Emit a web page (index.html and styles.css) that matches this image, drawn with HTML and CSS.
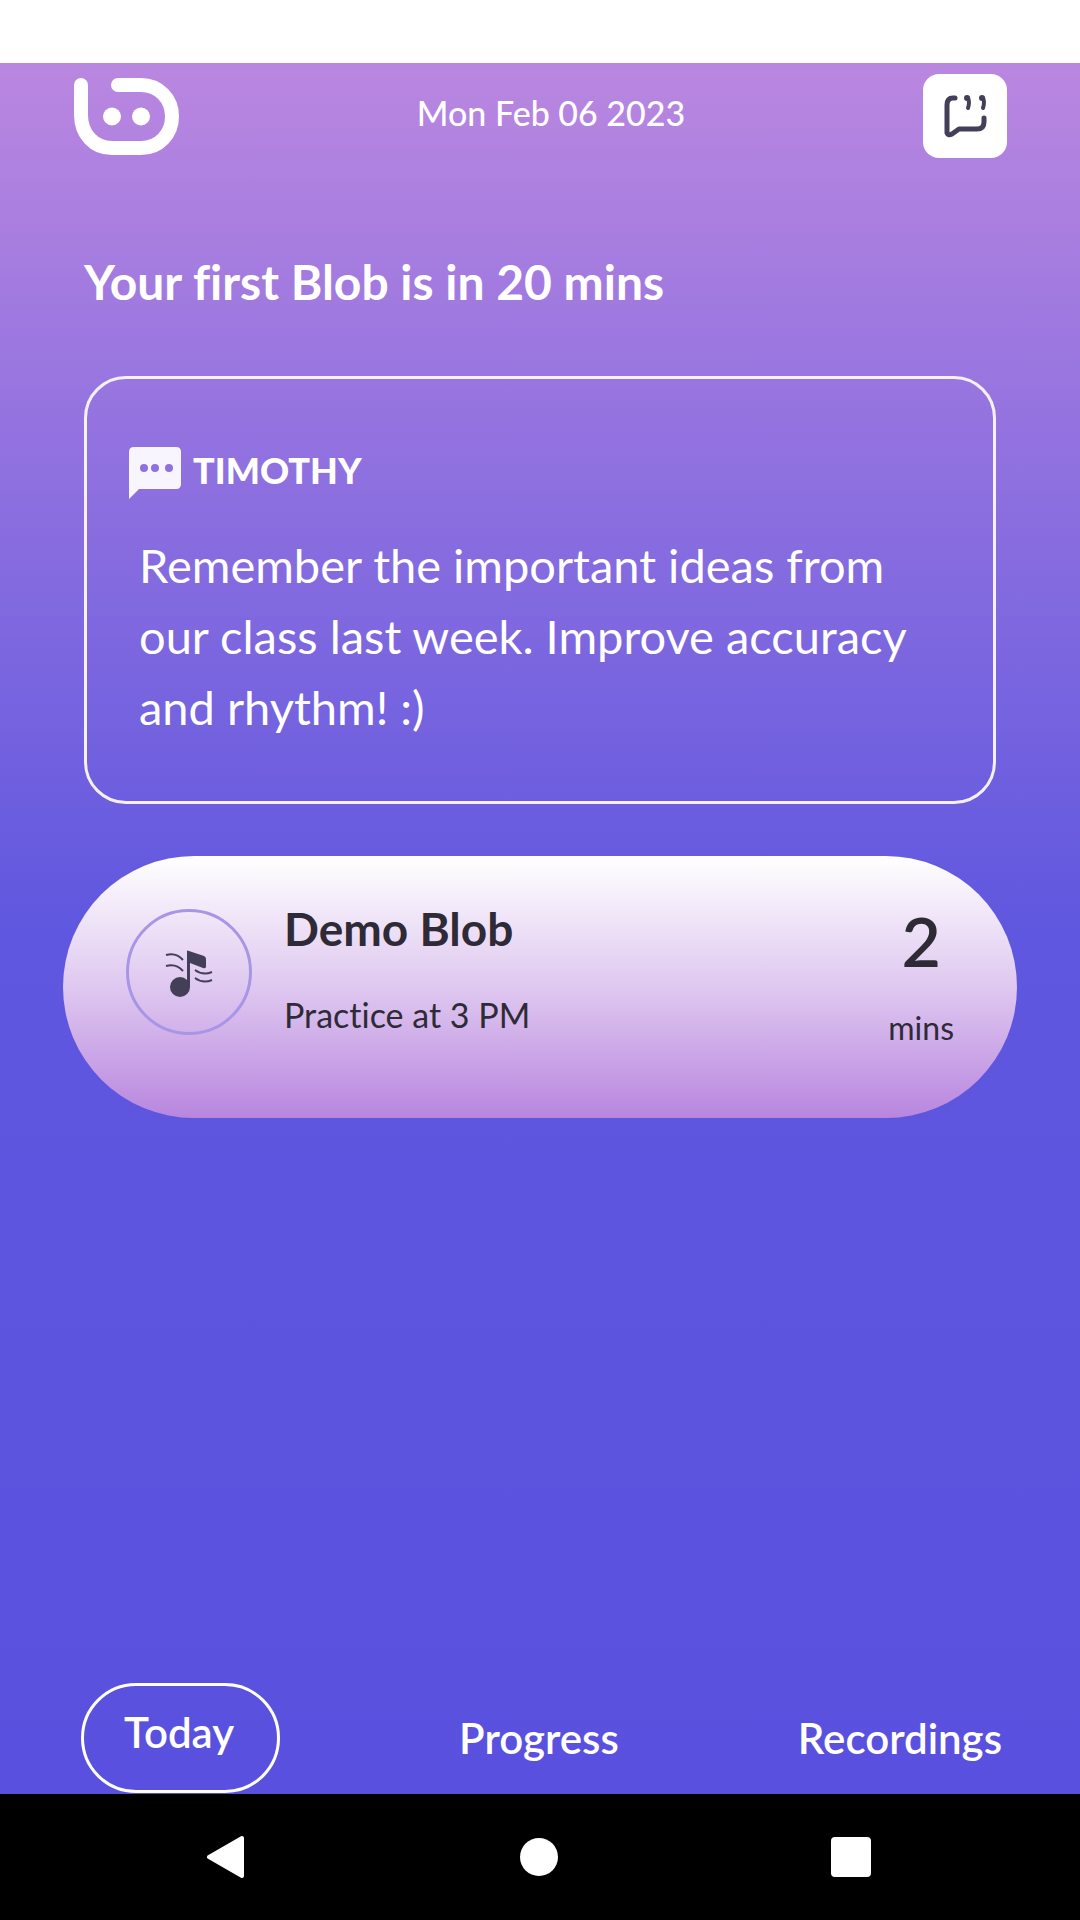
FILE: index.html
```html
<!DOCTYPE html>
<html lang="en">
<head>
<meta charset="utf-8">
<meta name="viewport" content="width=device-width, initial-scale=1">
<title>Today</title>
<link rel="stylesheet" href="styles.css">
</head>
<body>
<div class="status-bar"></div>
<div class="app">
  <header class="header">
    <svg class="logo" viewBox="0 0 105 77" aria-hidden="true">
      <path d="M7 7V37C7 56 20 70 38 70H67C85 70 98 56 98 38.500S85 7 67 7H44" fill="none" stroke="#fff" stroke-width="14" stroke-linecap="round"/>
      <circle cx="38" cy="38.500" r="9" fill="#fff"/>
      <circle cx="67" cy="38.500" r="9" fill="#fff"/>
    </svg>
    <time class="date" datetime="2023-02-06">Mon Feb 06 2023</time>
    <button class="feedback" type="button" aria-label="Feedback">
      <svg viewBox="0 0 84 84" aria-hidden="true">
        <g fill="none" stroke="#433f59" stroke-width="5" stroke-linecap="round" stroke-linejoin="round">
          <path d="M32 24H30Q24 24 24 31V59Q25 62 29 60L36 55H54Q61 55 61 48V44"/>
          <path stroke-width="4" d="M45 24Q47 28 45 34"/>
          <path stroke-width="4" d="M60 24Q62 28 60 34"/>
        </g>
        <circle cx="44" cy="24" r="3" fill="#433f59"/>
        <circle cx="59" cy="24" r="3" fill="#433f59"/>
      </svg>
    </button>
  </header>
  <main class="main">
    <h1 class="title">Your first Blob is in 20 mins</h1>
    <section class="message">
      <div class="sender">
        <svg class="bubble" viewBox="0 0 52 52" aria-hidden="true">
          <path fill="#f9f5fe" fill-rule="evenodd" d="M5 0H47Q52 0 52 5V37Q52 42 47 42H10L0 52V5Q0 0 5 0ZM11 21a4 4 0 1 0 8 0a4 4 0 1 0-8 0ZM22 21a4 4 0 1 0 8 0a4 4 0 1 0-8 0ZM36 21a4 4 0 1 0 8 0a4 4 0 1 0-8 0Z"/>
        </svg>
        <h2 class="name">TIMOTHY</h2>
      </div>
      <p class="text">Remember the important ideas from our class last week. Improve accuracy and rhythm! :)</p>
    </section>
    <article class="blob">
      <div class="badge">
        <svg viewBox="0 0 48 48" aria-hidden="true">
          <g fill="#433f59">
            <circle cx="15" cy="37" r="10"/>
            <path d="M22 1Q22 0 24 1L39 6Q41 7 41 9V17Q40 19 38 18L25 13V37H22Z"/>
          </g>
          <g fill="none" stroke="#433f59" stroke-width="2">
            <path d="M1 5Q11 2 18 10"/>
            <path d="M1 16Q11 13 18 21"/>
            <path d="M30 20Q38 26 47 22"/>
            <path d="M30 28Q38 34 47 30"/>
          </g>
        </svg>
      </div>
      <div class="info">
        <h2 class="blob-name">Demo Blob</h2>
        <p class="when">Practice at 3 PM</p>
      </div>
      <div class="duration">
        <span class="amount">2</span>
        <span class="unit">mins</span>
      </div>
    </article>
  </main>
  <nav class="tabs">
    <a class="tab active" href="#today" aria-current="page">Today</a>
    <a class="tab" href="#progress">Progress</a>
    <a class="tab" href="#recordings">Recordings</a>
  </nav>
</div>
<footer class="system-nav">
  <button type="button" aria-label="Back"><svg viewBox="0 0 40 44"><path d="M35 3V41L2 22Z" fill="#fff" stroke="#fff" stroke-width="4" stroke-linejoin="round"/></svg></button>
  <button type="button" aria-label="Home"><svg viewBox="0 0 40 44"><circle cx="20" cy="22" r="19" fill="#fff"/></svg></button>
  <button type="button" aria-label="Recent apps"><svg viewBox="0 0 40 44"><rect y="2" width="40" height="40" rx="4" fill="#fff"/></svg></button>
</footer>
</body>
</html>
```
FILE: styles.css
```css
* {
  box-sizing: border-box;
}

body {
  display: flex;
  flex-direction: column;
  min-height: 100vh;
  margin: 0;
  background: #fff;
  color: #fff;
  font-family: Lato, "Noto Sans", sans-serif;
  font-variant-ligatures: none;
}

h1, h2, p {
  margin: 0;
}

button {
  display: flex;
  padding: 0;
  border: 0;
  background: none;
}

svg {
  display: block;
}

.status-bar {
  height: 63px;
}

.app {
  display: flex;
  flex: 1;
  flex-direction: column;
  background: linear-gradient(#ba87e0, #5f57df 50%, #5a50df);
}

.header {
  display: flex;
  align-items: center;
  justify-content: space-between;
  padding: 11px 73px 0 74px;
}

.logo {
  width: 105px;
  height: 77px;
}

.date {
  padding-bottom: 6px;
  font-size: 34px;
  font-weight: 500;
  line-height: 48px;
}

.feedback {
  border-radius: 16px;
  background: #fff;
}

.feedback svg {
  width: 84px;
  height: 84px;
}

.main {
  display: flex;
  flex: 1;
  flex-direction: column;
  padding: 90px 63px 0;
}

.title {
  margin: 0 21px;
  font-size: 48px;
  line-height: 68px;
}

.message {
  margin: 60px 21px 0;
  padding: 58px 42px;
  border: 3px solid #f6f0fd;
  border-radius: 42px;
}

.sender {
  display: flex;
  align-items: center;
  gap: 12px;
  height: 72px;
}

.bubble {
  width: 52px;
  height: 52px;
}

.name {
  padding-bottom: 6px;
  font-size: 36px;
  font-weight: 900;
  line-height: 48px;
}

.text {
  margin-top: 21px;
  padding: 0 10px;
  font-size: 47px;
  line-height: 71px;
}

.blob {
  display: flex;
  align-items: flex-start;
  margin-top: 52px;
  padding: 39px 63px 66px;
  border-radius: 131px;
  background: linear-gradient(#fff, #dfc8f0 50%, #b886df);
  color: #2e2b36;
}

.badge {
  display: grid;
  place-items: center;
  width: 126px;
  height: 126px;
  margin-top: 14px;
  padding-top: 4px;
  border: 3px solid #a995e6;
  border-radius: 50%;
}

.badge svg {
  width: 48px;
  height: 48px;
}

.info {
  flex: 1;
  padding-left: 32px;
}

.blob-name {
  font-size: 46px;
  line-height: 68px;
}

.when {
  margin-top: 28px;
  font-size: 34px;
  line-height: 48px;
}

.duration {
  display: flex;
  flex-direction: column;
  align-items: center;
  gap: 17px;
}

.amount {
  font-size: 68px;
  font-weight: 600;
  line-height: 92px;
}

.unit {
  font-size: 32px;
  line-height: 48px;
}

.tabs {
  display: flex;
  align-items: center;
  justify-content: space-between;
  padding: 0 78px 1px 81px;
}

.tab {
  color: #fff;
  font-size: 42px;
  font-weight: 600;
  line-height: 48px;
  text-decoration: none;
}

.active {
  padding: 22px 43px 34px 40px;
  border: 3px solid #fff;
  border-radius: 55px;
}

.system-nav {
  display: flex;
  align-items: center;
  justify-content: space-between;
  height: 126px;
  padding: 0 209px 0 207px;
  background: #000;
}

.system-nav svg {
  width: 40px;
  height: 44px;
}
```
